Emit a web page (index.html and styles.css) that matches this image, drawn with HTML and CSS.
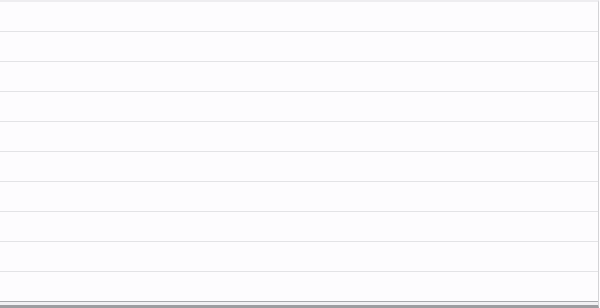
FILE: index.html
```html
<!DOCTYPE html>
<html>
<head>
<meta charset="utf-8">
<link rel="stylesheet" href="styles.css">
</head>
<body>
<div class="frame">
  <div class="table">
    <div class="row"></div>
    <div class="row"></div>
    <div class="row"></div>
    <div class="row"></div>
    <div class="row"></div>
    <div class="row"></div>
    <div class="row"></div>
    <div class="row"></div>
    <div class="row"></div>
    <div class="row last"></div>
  </div>
  <div class="footer"></div>
</div>
</body>
</html>
```

FILE: styles.css
```css
html, body {
  margin: 0;
  padding: 0;
  background: #fdfcfe;
  font-family: "Liberation Sans", Arial, sans-serif;
}
.frame {
  width: 599px;
  height: 308px;
  display: flex;
  flex-direction: column;
  overflow: hidden;
}
.table {
  border-top: 2px solid #eeedf0;
  border-right: 1px solid #d3d3d6;
}
.row {
  height: 29px;
  border-bottom: 1px solid #e3e3e6;
}
.row.last {
  border-bottom: 1px solid #a9a9ad;
}
.footer {
  height: 3px;
  background: #f1f0f3;
  border-bottom: 3px solid #9d9da1;
  border-right: 1px solid #d3d3d6;
}
```
